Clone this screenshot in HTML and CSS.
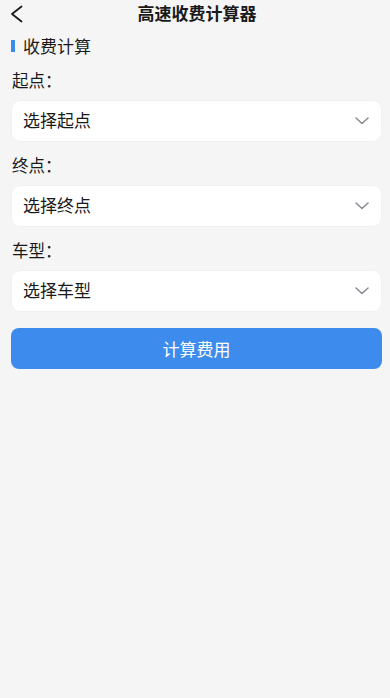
FILE: index.html
```html
<!DOCTYPE html>
<html lang="zh-CN">
<head>
<meta charset="utf-8">
<meta name="viewport" content="width=device-width, initial-scale=1">
<title>高速收费计算器</title>
<link rel="stylesheet" href="styles.css">
</head>
<body>
<div class="page">
  <header class="nav">
    <svg class="back" width="14" height="18" viewBox="0 0 14 18"><path d="M12.5 1.5 L3 9 L12.5 16.5" fill="none" stroke="#1a1a1a" stroke-width="1.8" stroke-linecap="round" stroke-linejoin="round"/></svg>
    <h1 class="title">高速收费计算器</h1>
  </header>
  <main class="content">
    <div class="section-title"><span class="bar"></span>收费计算</div>
    <div class="field">
      <div class="label">起点：</div>
      <div class="select"><span class="placeholder">选择起点</span><svg class="arrow" width="14" height="8" viewBox="0 0 14 8"><path d="M1 1 L7 6.5 L13 1" fill="none" stroke="#8a8d92" stroke-width="1.6" stroke-linecap="round" stroke-linejoin="round"/></svg></div>
    </div>
    <div class="field">
      <div class="label">终点：</div>
      <div class="select"><span class="placeholder">选择终点</span><svg class="arrow" width="14" height="8" viewBox="0 0 14 8"><path d="M1 1 L7 6.5 L13 1" fill="none" stroke="#8a8d92" stroke-width="1.6" stroke-linecap="round" stroke-linejoin="round"/></svg></div>
    </div>
    <div class="field">
      <div class="label">车型：</div>
      <div class="select"><span class="placeholder">选择车型</span><svg class="arrow" width="14" height="8" viewBox="0 0 14 8"><path d="M1 1 L7 6.5 L13 1" fill="none" stroke="#8a8d92" stroke-width="1.6" stroke-linecap="round" stroke-linejoin="round"/></svg></div>
    </div>
    <button class="btn">计算费用</button>
  </main>
</div>
</body>
</html>
```
FILE: styles.css
```css
html, body {
  margin: 0;
  padding: 0;
  background: #f5f5f5;
}
body {
  font-family: "Noto Sans CJK SC", "Noto Sans", sans-serif;
  color: #1a1a1a;
  width: 390px;
  height: 698px;
}
.page {
  display: flex;
  flex-direction: column;
}
.nav {
  height: 26px;
  display: flex;
  align-items: center;
  justify-content: center;
  position: relative;
}
.back {
  position: absolute;
  left: 9px;
  top: 5px;
}
.title {
  margin: 0;
  font-size: 17px;
  font-weight: 700;
  line-height: 26px;
  padding-left: 4px;
}
.content {
  display: flex;
  flex-direction: column;
  padding: 8px 9px 0 11px;
}
.section-title {
  display: flex;
  align-items: center;
  font-size: 17px;
  line-height: 24px;
  height: 24px;
}
.bar {
  width: 4px;
  height: 12px;
  background: #3b8beb;
  margin-right: 8px;
}
.field {
  display: flex;
  flex-direction: column;
  gap: 9px;
  margin-top: 10px;
}
.field + .field {
  margin-top: 12px;
}
.label {
  font-size: 16.5px;
  line-height: 24px;
  height: 24px;
  padding-left: 1px;
}
.select {
  height: 40px;
  background: #ffffff;
  border-radius: 8px;
  display: flex;
  align-items: center;
  justify-content: space-between;
  padding: 0 12px 0 11px;
  font-size: 17px;
  box-shadow: 0 0 0 0.5px #ececec;
  margin-left: 1px;
}
.placeholder {
  line-height: 24px;
  margin-bottom: 3px;
}
.arrow {
  margin-bottom: 1px;
}
.btn {
  margin-top: 17px;
  height: 41px;
  border: none;
  border-radius: 8px;
  background: #3d8ced;
  color: #ffffff;
  font-family: "Noto Sans CJK SC", "Noto Sans", sans-serif;
  font-size: 17px;
  padding: 0;
  line-height: 41px;
  width: 371px;
}
```
